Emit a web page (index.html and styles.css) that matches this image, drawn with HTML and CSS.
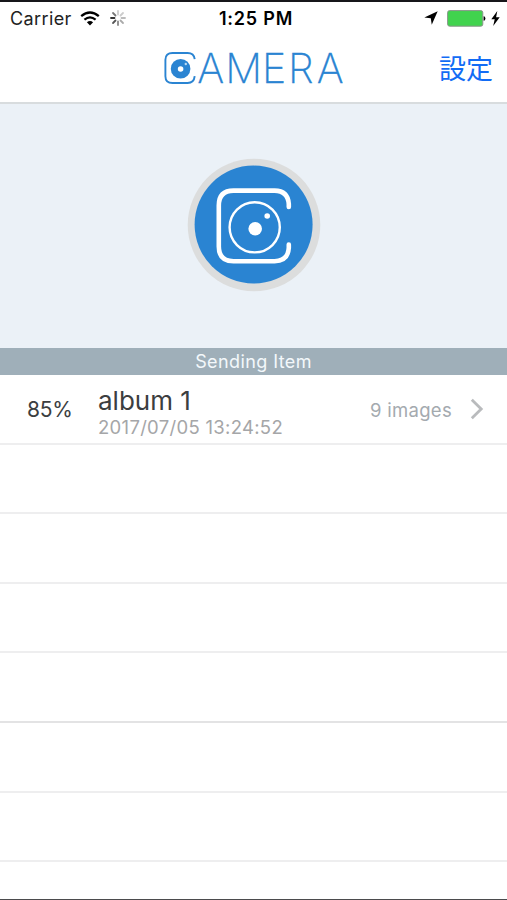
FILE: index.html
```
<!DOCTYPE html>
<html lang="en">
<head>
  <meta charset="UTF-8">
  <meta name="viewport" content="width=device-width, initial-scale=1.0">
  <title>Camera</title>
  <link rel="stylesheet" href="styles.css">
</head>
<body>
  <div class="status-bar">
    <div class="status-left">
      <span class="carrier">Carrier</span>
      <svg class="wifi" width="20" height="15" viewBox="0 0 20 15">
        <path d="M1.2 5.2 Q10 -2.2 18.8 5.2" fill="none" stroke="#000" stroke-width="2.3"/>
        <path d="M4.4 8.6 Q10 4 15.6 8.6" fill="none" stroke="#000" stroke-width="2.2"/>
        <path d="M6.9 11.2 Q10 8.6 13.1 11.2 L10 14.4 Z"/>
      </svg>
      <svg class="spinner" width="16" height="16" viewBox="-8 -8 16 16" stroke-width="1.8" stroke-linecap="round">
        <path d="M0 -3.5V-7" stroke="#ccc"/>
        <path d="M2.5 -2.5L5 -5" stroke="#ccc"/>
        <path d="M3.5 0H7" stroke="#bbb"/>
        <path d="M2.5 2.5L5 5" stroke="#aaa"/>
        <path d="M0 3.5V7" stroke="#888"/>
        <path d="M-2.5 2.5L-5 5" stroke="#555"/>
        <path d="M-3.5 0H-7" stroke="#333"/>
        <path d="M-2.5 -2.5L-5 -5" stroke="#777"/>
      </svg>
    </div>
    <span class="time">1:25 PM</span>
    <div class="status-right">
      <svg width="14" height="14" viewBox="0 0 13 13"><path d="M12.7 0.3L7.2 12.8L6.3 6.8L0.3 6Z"/></svg>
      <svg class="battery" width="39" height="17" viewBox="0 0 39 17">
        <rect x="0.6" y="0.6" width="35.2" height="15.6" rx="2" fill="#41d34e" stroke="#8b958c"/>
        <path d="M36.6 6.2Q38.4 6.2 38.4 8.5Q38.4 10.8 36.6 10.8Z"/>
      </svg>
      <svg width="9" height="15" viewBox="0 0 9 15"><path d="M6.3 0L0.3 8.3H3.7L2.2 15L8.7 6.2H5.1Z"/></svg>
    </div>
  </div>

  <header>
    <svg class="logo" width="190" height="54" viewBox="-4 -10 190 54">
      <path d="M31.7 8.2Q31 2 24.6 2H9.5Q2.4 2 2.4 8.8V25.2Q2.4 32 9.5 32H24.6Q31 32 31.7 25.2" fill="none" stroke="#2a84d2" stroke-width="1.9"/>
      <circle cx="17.6" cy="17.7" r="9.8" fill="#2a84d2"/>
      <circle cx="17.6" cy="18" r="2.8" fill="#fff"/>
      <circle cx="22.8" cy="13" r="1.2" fill="#b9d8f2"/>
      <text class="logo-text" x="34.3 62.3 99 125 153.8" y="32.3">AMERA</text>
    </svg>
    <a class="settings">設定</a>
  </header>

  <section class="hero">
    <svg width="134" height="134" viewBox="0 0 134 134">
      <circle cx="67" cy="67" r="66.3" fill="#dcdddd"/>
      <circle cx="66.6" cy="66.6" r="59" fill="#2a84d2"/>
      <g fill="none" stroke="#fff">
        <path d="M101.8 49V46Q101 32.9 87.6 32.6H46.5Q31.8 32.6 31.8 47.5V88.5Q31.8 103.2 46.5 103.2H87.6Q101 103 101.8 89.8V86.5" stroke-width="4.6" stroke-linecap="round"/>
        <circle cx="67.7" cy="69.3" r="25.1" stroke-width="2.4"/>
      </g>
      <circle cx="68.2" cy="70.8" r="6.8" fill="#fff"/>
      <circle cx="80.2" cy="58" r="2.8" fill="#fff"/>
    </svg>
  </section>

  <main>
    <h2>Sending Item</h2>
    <ul class="list">
      <li class="item">
        <span class="percent">85%</span>
        <div class="info">
          <span class="name">album 1</span>
          <span class="date">2017/07/05 13:24:52</span>
        </div>
        <span class="count">9 images</span>
        <svg class="arrow" width="14" height="22" viewBox="0 0 14 22"><path d="M1.8 1.8L11.2 11L1.8 20.2" fill="none" stroke="#b9bbbd" stroke-width="2.8"/></svg>
      </li>
      <li></li>
      <li></li>
      <li></li>
      <li class="strong"></li>
      <li></li>
      <li></li>
    </ul>
  </main>
</body>
</html>
```
FILE: styles.css
```
* {
  box-sizing: border-box;
}

body {
  margin: 0;
  height: 900px;
  display: flex;
  flex-direction: column;
  overflow: hidden;
  background: #fff;
  border-top: 2px solid #17161a;
  border-bottom: 1px solid #4b4b4d;
  font-family: Inter, "Noto Sans CJK JP", sans-serif;
  color: #3c3e40;
}

svg {
  display: block;
  flex: none;
}

.status-bar {
  height: 32px;
  display: grid;
  grid-template-columns: 1fr auto 1fr;
  align-items: center;
  padding: 0 7px 0 10px;
  color: #000;
}

.status-left,
.status-right {
  display: flex;
  align-items: center;
}

.status-right {
  justify-content: flex-end;
  gap: 5px;
}

.battery {
  margin-left: 4px;
}

.carrier {
  font-size: 18px;
  letter-spacing: 0.4px;
  color: #222;
}

.wifi {
  margin-left: 8px;
}

.spinner {
  margin-left: 10px;
}

.time {
  padding-left: 2px;
  font-size: 18px;
  font-weight: 600;
  letter-spacing: 0.8px;
}

header {
  height: 70px;
  display: grid;
  grid-template-columns: 1fr auto 1fr;
  align-items: center;
  padding: 0 14px;
  border-bottom: 2px solid #d8dcde;
}

.logo {
  grid-column: 2;
}

.logo-text {
  font-family: Inter, sans-serif;
  font-size: 41px;
  font-weight: 200;
  fill: #2a84d2;
  stroke: #2a84d2;
  stroke-width: 0.3px;
}

.settings {
  justify-self: end;
  font-family: "Noto Sans CJK JP", sans-serif;
  font-size: 27px;
  line-height: 40px;
  color: #126cf5;
}

.hero {
  height: 244px;
  display: flex;
  justify-content: center;
  align-items: center;
  padding-bottom: 2px;
  background: #ebf1f7;
}

h2 {
  margin: 0;
  height: 27px;
  line-height: 27px;
  text-align: center;
  font-size: 18px;
  font-weight: 400;
  letter-spacing: 0.4px;
  color: #f3f8fb;
  background: #9fafb9;
}

.list {
  margin: 0;
  padding: 0;
  list-style: none;
}

.list li {
  height: 69.6px;
  border-bottom: 2px solid #eeeeef;
}

.list .strong {
  border-color: #e3e3e4;
}

.list .item {
  display: flex;
  align-items: center;
  padding: 0 23px 0 27px;
}

.percent {
  width: 71px;
  padding-top: 2px;
  font-size: 21px;
  letter-spacing: -0.2px;
}

.info {
  flex: 1;
  display: flex;
  flex-direction: column;
  padding-top: 9px;
}

.name {
  font-size: 26px;
  line-height: 29px;
}

.date {
  font-size: 18.5px;
  line-height: 25px;
  letter-spacing: 0.3px;
  color: #a5a6a8;
}

.count {
  margin-right: 18px;
  padding-top: 2px;
  font-size: 18.5px;
  letter-spacing: 0.3px;
  color: #a4aaaf;
}
```
